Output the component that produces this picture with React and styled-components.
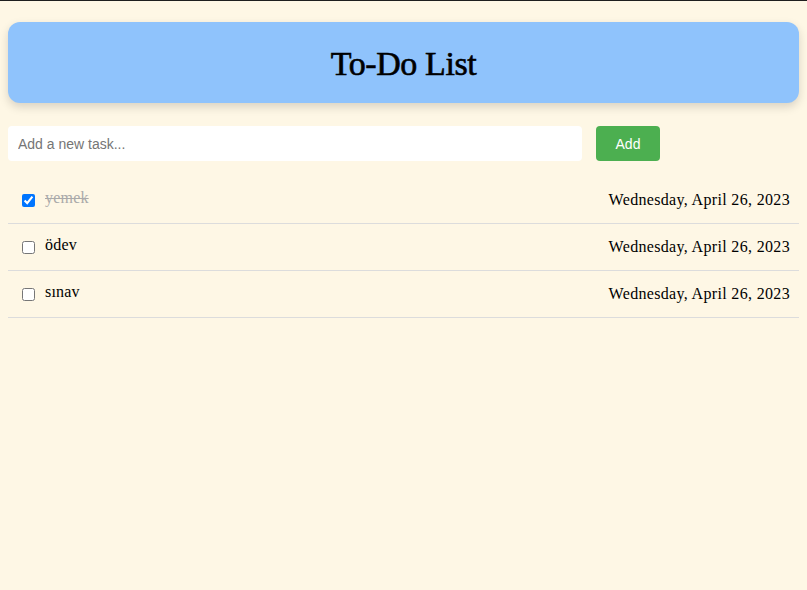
import React, { useState } from 'react';
import styled, { createGlobalStyle } from 'styled-components';

const GlobalStyle = createGlobalStyle`
  html, body {
    margin: 0;
    padding: 0;
    background: #fef7e5;
  }
  body {
    border-top: 1px solid #1e1e1e;
    min-height: 589px;
    font-family: "Liberation Serif", "DejaVu Serif", serif;
  }
`;

const Page = styled.div`
  padding: 21px 8px 0;
`;

const Header = styled.header`
  display: flex;
  align-items: center;
  justify-content: center;
  height: 81px;
  background: #8fc3fc;
  border-radius: 12px;
  box-shadow: 0 4px 10px rgba(0, 0, 0, 0.15);
`;

const Title = styled.h1`
  margin: 0;
  font-size: 34px;
  font-weight: normal;
  letter-spacing: -0.4px;
  -webkit-text-stroke: 0.6px #000;
  color: #000;
  position: relative;
  top: 1px;
`;

const Form = styled.form`
  display: flex;
  align-items: center;
  gap: 14px;
  margin-top: 23px;
`;

const Input = styled.input`
  flex: 1;
  height: 35px;
  box-sizing: border-box;
  padding: 0 10px;
  border: none;
  border-radius: 4px;
  background: #fff;
  font-family: "Liberation Sans", Arial, sans-serif;
  font-size: 14px;
  color: #333;
  outline: none;

  &::placeholder {
    color: #757575;
  }
`;

const AddButton = styled.button`
  width: 64px;
  height: 35px;
  margin-right: 139px;
  border: none;
  border-radius: 4px;
  background: #4caf50;
  color: #fff;
  font-family: "Liberation Sans", Arial, sans-serif;
  font-size: 14px;
  cursor: pointer;
`;

const List = styled.ul`
  list-style: none;
  margin: 16px 0 0;
  padding: 0;
`;

const Row = styled.li`
  display: flex;
  align-items: center;
  justify-content: space-between;
  height: 46px;
  padding: 0 9px 0 14px;
  border-bottom: 1px solid #dcdcdc;
`;

const Left = styled.label`
  display: flex;
  align-items: center;
  gap: 10px;
  font-size: 16px;
`;

const Check = styled.input`
  width: 13px;
  height: 13px;
  margin: 0;
`;

const TaskText = styled.span`
  color: ${p => (p.$done ? '#aaa' : '#000')};
  text-decoration: ${p => (p.$done ? 'line-through' : 'none')};
  position: relative;
  top: -2px;
  letter-spacing: 0.2px;
`;

const DateText = styled.span`
  font-size: 16px;
  letter-spacing: 0.33px;
  color: #000;
`;

const initial = [
  { id: 1, text: 'yemek', done: true },
  { id: 2, text: 'ödev', done: false },
  { id: 3, text: 'sınav', done: false },
];

export default function App() {
  const [tasks, setTasks] = useState(initial);
  const [value, setValue] = useState('');

  const toggle = id => {
    setTasks(tasks.map(t => (t.id === id ? { ...t, done: !t.done } : t)));
  };

  const onSubmit = e => {
    e.preventDefault();
    if (!value.trim()) return;
    setTasks([...tasks, { id: Date.now(), text: value, done: false }]);
    setValue('');
  };

  return (
    <Page>
      <GlobalStyle />
      <Header>
        <Title>To-Do List</Title>
      </Header>
      <Form onSubmit={onSubmit}>
        <Input
          placeholder="Add a new task..."
          value={value}
          onChange={e => setValue(e.target.value)}
        />
        <AddButton type="submit">Add</AddButton>
      </Form>
      <List>
        {tasks.map(t => (
          <Row key={t.id}>
            <Left>
              <Check type="checkbox" checked={t.done} onChange={() => toggle(t.id)} />
              <TaskText $done={t.done}>{t.text}</TaskText>
            </Left>
            <DateText>Wednesday, April 26, 2023</DateText>
          </Row>
        ))}
      </List>
    </Page>
  );
}
